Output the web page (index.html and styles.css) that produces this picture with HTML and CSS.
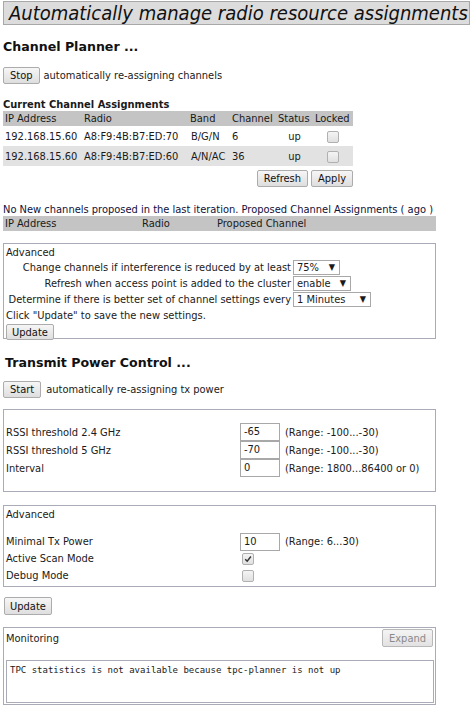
FILE: index.html
```html
<!DOCTYPE html>
<html>
<head>
<meta charset="utf-8">
<title>Radio resource assignments</title>
<link rel="stylesheet" href="styles.css">
</head>
<body>
<div class="page">
  <div class="title">Automatically manage radio resource assignments</div>

  <h2 class="heading">Channel Planner ...</h2>
  <div class="btn-row"><button class="btn">Stop</button><span>automatically re-assigning channels</span></div>

  <div class="sub">Current Channel Assignments</div>
  <table class="assign">
    <colgroup><col class="c1"><col class="c2"><col class="c3"><col class="c4"><col class="c5"><col class="c6"></colgroup>
    <thead>
      <tr><th>IP Address</th><th>Radio</th><th>Band</th><th>Channel</th><th>Status</th><th>Locked</th></tr>
    </thead>
    <tbody>
      <tr><td>192.168.15.60</td><td>A8:F9:4B:B7:ED:70</td><td class="band">B/G/N</td><td>6</td><td class="ctr">up</td><td class="ctr"><span class="cb"></span></td></tr>
      <tr class="alt"><td>192.168.15.60</td><td>A8:F9:4B:B7:ED:60</td><td class="band">A/N/AC</td><td>36</td><td class="ctr">up</td><td class="ctr"><span class="cb"></span></td></tr>
    </tbody>
  </table>
  <div class="table-actions"><button class="btn">Refresh</button><button class="btn">Apply</button></div>

  <div class="note">No New channels proposed in the last iteration. Proposed Channel Assignments ( ago )</div>
  <div class="proposed"><span class="p1">IP Address</span><span class="p2">Radio</span><span class="p3">Proposed Channel</span></div>

  <div class="box adv1">
    <div class="box-title">Advanced</div>
    <div class="opt"><span class="opt-label">Change channels if interference is reduced by at least</span><span class="sel w1">75%<span class="arr">▼</span></span></div>
    <div class="opt"><span class="opt-label">Refresh when access point is added to the cluster</span><span class="sel w2">enable<span class="arr">▼</span></span></div>
    <div class="opt"><span class="opt-label">Determine if there is better set of channel settings every</span><span class="sel w3">1 Minutes<span class="arr">▼</span></span></div>
    <div class="hint">Click "Update" to save the new settings.</div>
    <button class="btn btn-upd">Update</button>
  </div>

  <h2 class="heading tpc">Transmit Power Control ...</h2>
  <div class="btn-row tpc-row"><button class="btn">Start</button><span>automatically re-assigning tx power</span></div>

  <div class="box rssi">
    <div class="frow"><span class="flabel">RSSI threshold 2.4 GHz</span><span class="inp">-65</span><span class="range">(Range: -100...-30)</span></div>
    <div class="frow"><span class="flabel">RSSI threshold 5 GHz</span><span class="inp">-70</span><span class="range">(Range: -100...-30)</span></div>
    <div class="frow"><span class="flabel">Interval</span><span class="inp">0</span><span class="range">(Range: 1800...86400 or 0)</span></div>
  </div>

  <div class="box adv2">
    <div class="box-title">Advanced</div>
    <div class="frow first"><span class="flabel">Minimal Tx Power</span><span class="inp">10</span><span class="range">(Range: 6...30)</span></div>
    <div class="frow"><span class="flabel">Active Scan Mode</span><span class="cb checked"><svg viewBox="0 0 10 10" width="8" height="8"><path d="M1.5 5.2 L4 7.8 L8.6 1.8" fill="none" stroke="#333" stroke-width="1.8"/></svg></span></div>
    <div class="frow"><span class="flabel">Debug Mode</span><span class="cb"></span></div>
  </div>

  <button class="btn btn-upd2">Update</button>

  <div class="box mon">
    <div class="mon-head"><span class="box-title">Monitoring</span><button class="btn btn-dis">Expand</button></div>
    <div class="console">TPC statistics is not available because tpc-planner is not up</div>
  </div>
</div>
</body>
</html>
```

FILE: styles.css
```css
html, body {
  margin: 0;
  padding: 0;
  background: #fff;
}
body {
  font-family: "DejaVu Sans Condensed", "DejaVu Sans", Verdana, sans-serif;
  font-stretch: condensed;
  font-size: 11px;
  color: #1a1a1a;
  line-height: 13px;
}
.page {
  padding: 1px 3px 0 3px;
  width: 467px;
}
.title {
  background: #dcdcdc;
  border: 1px solid #a8a8a8;
  height: 22px;
  line-height: 22px;
  padding-left: 5px;
  font-style: italic;
  font-size: 20px;
  color: #111;
  white-space: nowrap;
  overflow: hidden;
}
.heading {
  font-family: "DejaVu Sans", Verdana, sans-serif;
  font-stretch: normal;
  font-size: 12.6px;
  font-weight: bold;
  margin: 14px 0 0 0;
  line-height: 16px;
  color: #111;
}
.btn {
  font-family: inherit;
  font-stretch: condensed;
  font-size: 11px;
  line-height: 13px;
  color: #111;
  background: linear-gradient(#f6f6f6, #dedede);
  border: 1px solid #acacac;
  border-radius: 2px;
  padding: 1px 6px;
  height: 17px;
  margin: 0;
  cursor: default;
}
.btn-row {
  display: flex;
  align-items: center;
  gap: 4px;
  margin-top: 12px;
}
.sub {
  font-weight: bold;
  margin-top: 14px;
  line-height: 13px;
}
.assign {
  border-collapse: collapse;
  table-layout: fixed;
  width: 350px;
}
.assign .c1 { width: 79px; }
.assign .c2 { width: 106px; }
.assign .c3 { width: 42px; }
.assign .c4 { width: 46px; }
.assign .c5 { width: 37px; }
.assign .c6 { width: 40px; }
.assign th {
  background: #c4c4c4;
  font-weight: normal;
  text-align: left;
  height: 15px;
  padding: 0 2px;
  white-space: nowrap;
}
.assign td {
  height: 20px;
  padding: 0 2px;
  white-space: nowrap;
}
.assign td.band { padding-left: 3px; }
.assign td.ctr { text-align: center; }
.assign tr.alt td { background: #e2e2e2; }
.cb {
  display: inline-flex;
  align-items: center;
  justify-content: center;
  width: 10px;
  height: 10px;
  border: 1px solid #b0b0b0;
  border-radius: 2px;
  background: linear-gradient(#f4f4f4, #e0e0e0);
  vertical-align: middle;
}
.table-actions {
  width: 350px;
  display: flex;
  justify-content: flex-end;
  gap: 3px;
  margin-top: 4px;
}
.note {
  margin-top: 16px;
  color: #10103a;
  white-space: nowrap;
}
.proposed {
  display: flex;
  width: 429px;
  background: #c4c4c4;
  height: 15px;
  line-height: 15px;
  padding: 0 2px;
}
.proposed .p1 { width: 137px; }
.proposed .p2 { width: 75px; }
.box {
  border: 1px solid #a9acb6;
  width: 431px;
  box-sizing: content-box;
}
.adv1 {
  margin-top: 12px;
  padding: 2px 0 0 2px;
  width: 429px;
  height: 92px;
}
.box-title { line-height: 13px; }
.opt {
  display: flex;
  align-items: center;
  height: 16px;
}
.opt-label {
  width: 285px;
  text-align: right;
  padding-right: 2px;
  white-space: nowrap;
}
.sel {
  display: inline-flex;
  align-items: center;
  justify-content: space-between;
  border: 1px solid #a8a8a8;
  height: 13px;
  padding: 0 4px 0 3px;
  box-sizing: content-box;
  background: #fff;
}
.sel .arr { font-size: 9px; }
.w1 { width: 38px; }
.w2 { width: 49px; }
.w3 { width: 69px; }
.hint { margin-top: 2px; }
.btn-upd {
  margin-top: 2px;
  height: 16px;
  padding: 0 5px;
}
.tpc { margin: 16px 0 0 2px; }
.tpc-row { margin-top: 10px; gap: 5px; }
.rssi {
  margin-top: 11px;
  height: 68px;
  padding-top: 13px;
}
.frow {
  display: flex;
  align-items: center;
  height: 18px;
  padding-left: 2px;
  white-space: nowrap;
}
.flabel { width: 234px; }
.inp {
  width: 35px;
  height: 16px;
  line-height: 16px;
  border: 1px solid #a8a8a8;
  padding-left: 3px;
  margin-right: 5px;
  box-sizing: content-box;
}
.frow .cb { margin-left: 2px; }
.adv2 {
  margin-top: 13px;
  height: 78px;
  padding-top: 2px;
}
.adv2 .frow { height: 17px; }
.adv2 .box-title { padding-left: 2px; }
.adv2 .first { margin-top: 12px; }
.btn-upd2 {
  margin-top: 10px;
  height: 18px;
  padding: 0 5px;
  margin-left: 1px;
  display: block;
}
.mon {
  margin-top: 12px;
  height: 75px;
  padding-top: 1px;
}
.mon-head {
  display: flex;
  justify-content: space-between;
  align-items: flex-start;
  padding: 0 2px 0 2px;
  height: 31px;
}
.mon-head .box-title { margin-top: 3px; }
.btn-dis {
  color: #8a8a8a;
  height: 18px;
  width: 51px;
  padding: 0;
  background: linear-gradient(#f4f4f4, #e2e2e2);
  border-color: #b8b8b8;
}
.console {
  margin: 0 1px 0 2px;
  border: 1px solid #a9acb6;
  height: 43px;
  padding: 3px 3px;
  box-sizing: border-box;
  font-family: "DejaVu Sans Mono", "Liberation Mono", monospace;
  font-stretch: normal;
  font-size: 9px;
  line-height: 12px;
}
```
